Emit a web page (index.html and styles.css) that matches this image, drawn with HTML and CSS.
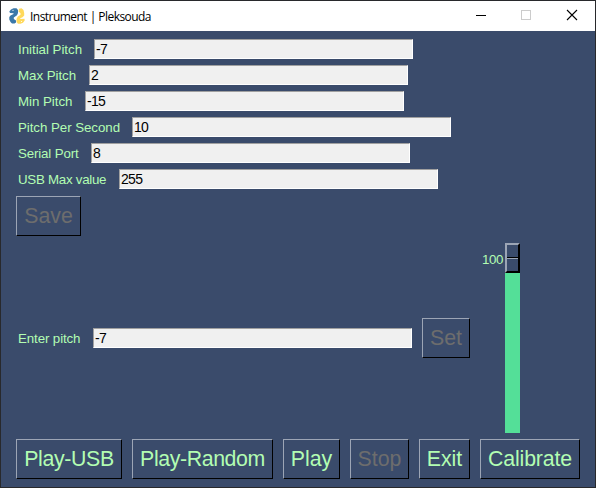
FILE: index.html
```html
<!DOCTYPE html>
<html lang="en">
<head>
<meta charset="utf-8">
<title>Instrument | Pleksouda</title>
<link rel="stylesheet" href="styles.css">
</head>
<body>
<div class="window">
  <header class="titlebar">
    <svg class="logo" width="16" height="16" viewBox="0 0 16 16">
      <path fill="#3b78a9" d="M2 1.500L4.500.2H7.500L9 2V5L8 7.300L4.800 9.500L4.800 11L7 12.500V14.500L5.500 15.500H3L1.500 14L.3 11.500V9L1.500 7.500L4.500 6V5.200L1 5L.3 3.500Z"/>
      <path fill="#ffd95c" d="M10 .8L12.500.3L14.500 2L15.200 5V7.500L13.500 9.200L11.300 10.300V11L15.500 10.800L15.700 12.500L14 14.800L11.500 15.800H9L7.500 14V11L8.800 8.600L11.500 6.800V5.200L9.500 3.500Z"/>
      <circle cx="4" cy="2.300" r=".6" fill="#fff"/>
      <circle cx="12.500" cy="13.500" r=".6" fill="#fff"/>
    </svg>
    <span class="title">Instrument | Pleksouda</span>
    <svg class="controls" width="120" height="30" viewBox="0 0 120 30" shape-rendering="crispEdges">
      <path d="M1 14.500h10" stroke="#000"/>
      <rect x="46.500" y="9.500" width="9" height="9" fill="none" stroke="#ccc"/>
      <path d="M92 9l10 10M102 9l-10 10" stroke="#000" stroke-width="1.100" shape-rendering="auto"/>
    </svg>
  </header>
  <main class="content">
    <div class="row"><label class="w-initial" for="initial">Initial Pitch</label><input id="initial" value="-7"></div>
    <div class="row"><label class="w-max" for="max">Max Pitch</label><input id="max" value="2"></div>
    <div class="row"><label class="w-min" for="min">Min Pitch</label><input id="min" value="-15"></div>
    <div class="row"><label class="w-speed" for="speed">Pitch Per Second</label><input id="speed" value="10"></div>
    <div class="row"><label class="w-port" for="port">Serial Port</label><input id="port" value="8"></div>
    <div class="row"><label class="w-usb" for="usb">USB Max value</label><input id="usb" value="255"></div>
    <button class="save" disabled>Save</button>
    <div class="pitch">
      <label class="w-enter" for="enter">Enter pitch</label><input id="enter" value="-7">
      <button class="set" disabled>Set</button>
      <span class="level">100</span>
      <div class="slider"><div class="thumb"><i></i><i></i></div></div>
    </div>
    <div class="actions">
      <button class="play-usb">Play-USB</button>
      <button class="play-random">Play-Random</button>
      <button class="play">Play</button>
      <button class="stop" disabled>Stop</button>
      <button class="exit">Exit</button>
      <button class="calibrate">Calibrate</button>
    </div>
  </main>
</div>
</body>
</html>
```
FILE: styles.css
```css
* { box-sizing: border-box; }
body { margin: 0; background: #252628; }
.window {
  width: 596px;
  height: 488px;
  border: 1px solid #28292c;
  background: #3a4b6b;
  overflow: hidden;
}
.titlebar {
  height: 30px;
  background: #fff;
  display: flex;
  align-items: center;
  padding-left: 8px;
}
.title {
  flex: 1;
  margin: 0 0 0 5px;
  font: 12px "Open Sans", "Noto Sans", sans-serif;
  letter-spacing: -0.54px;
  color: #000;
}
.controls { flex: none; }
.content {
  padding: 8px 0 0 15px;
  font-family: "Liberation Sans", Arial, sans-serif;
}
.row { display: flex; height: 20px; margin-bottom: 6px; }
label, .level { font-size: 13.33px; line-height: 20px; color: #b2fdb2; white-space: nowrap; }
label { height: 20px; padding: 1px 0 0 2px; line-height: 19px; flex: none; }
.w-initial { width: 78px; letter-spacing: -0.03px; }
.w-max { width: 73px; letter-spacing: -0.05px; }
.w-min { width: 69px; letter-spacing: -0.05px; }
.w-speed { width: 116px; letter-spacing: -0.06px; }
.w-port { width: 75px; letter-spacing: -0.15px; }
.w-usb { width: 103px; letter-spacing: -0.28px; }
.w-enter { width: 77px; letter-spacing: -0.12px; }
input {
  width: 319px;
  height: 20px;
  margin: 0;
  padding: 0 1px;
  border: 1px solid;
  border-color: #a0a0a0 #fff #fff #a0a0a0;
  border-radius: 0;
  outline: 0;
  background: #f0f0f0;
  color: #000;
  font: 14px "Liberation Sans", Arial, sans-serif;
  letter-spacing: -0.7px;
}
button {
  height: 40px;
  margin: 0;
  padding: 0;
  border: 1px solid;
  border-color: #9ca5b5 #000 #000 #9ca5b5;
  border-radius: 0;
  background: #3a4b6b;
  color: #b2fdb2;
  font: 21.33px "Liberation Sans", Arial, sans-serif;
  white-space: nowrap;
}
button:disabled { color: #6d6d6d; }
.save { display: block; width: 65px; margin-top: 7px; }
.pitch { display: flex; align-items: center; height: 190px; margin-top: 7px; }
.set { width: 48px; margin-left: 10px; }
.level { width: 21px; margin-left: 12px; align-self: flex-start; margin-top: 7px; letter-spacing: -0.4px; }
.slider { width: 15px; height: 190px; margin-left: 2px; background: #54df98; }
.thumb {
  height: 30px;
  border: solid;
  border-width: 2px;
  border-color: #9ca5b5 #000 #000 #9ca5b5;
  background: #3a4b6b;
}
.thumb i { display: block; height: 13px; }
.thumb i:first-child { border-bottom: 1px solid #000; }
.thumb i:last-child { border-top: 1px solid #9ca5b5; }
.actions { display: flex; gap: 10px; margin-top: 6px; }
.play-usb { width: 106px; letter-spacing: -0.35px; }
.play-random { width: 141px; letter-spacing: -0.4px; }
.play { width: 57px; }
.stop { width: 59px; }
.exit { width: 51px; }
.calibrate { width: 100px; letter-spacing: -0.15px; }
```
